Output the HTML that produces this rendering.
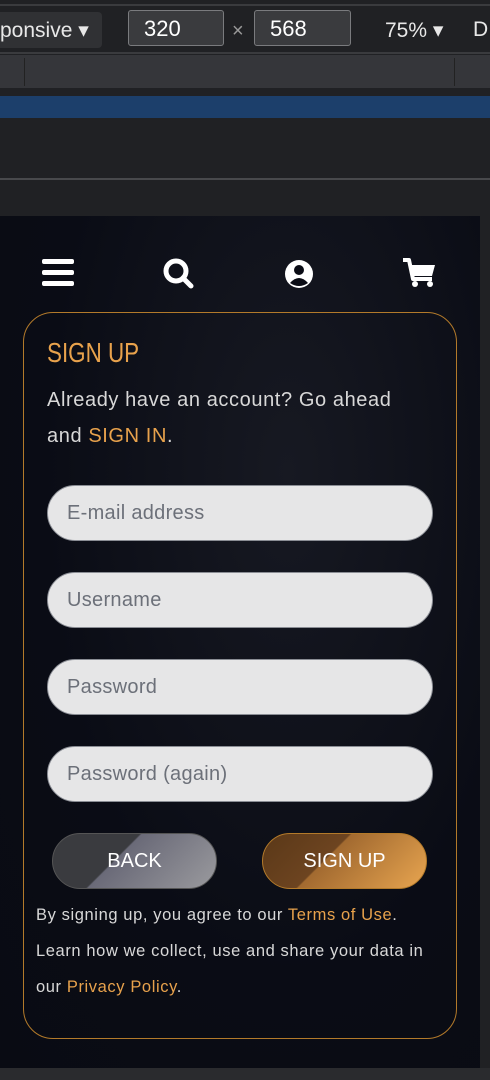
<!DOCTYPE html>
<html><head><style>
body{margin:0;width:490px;height:1080px;background:#202124;position:relative;overflow:hidden;font-family:"Liberation Sans",sans-serif}
.a{position:absolute}
.inp{position:absolute;left:47px;width:384px;height:54px;border:1px solid #8a8d94;border-radius:28px;background:#e6e6e7;color:#6c7079;font-size:20px;line-height:54px;box-sizing:content-box;letter-spacing:0.3px}
.inp span{margin-left:19px}
.btn{position:absolute;top:833px;width:163px;height:54px;border-radius:28px;color:#fff;font-size:20px;text-align:center;line-height:54px}
.o{color:#e8a24c}
.t{color:#d8d8d8}
</style></head><body>
<div class="a" style="left:0;top:4px;width:490px;height:2px;background:#3a3b3e"></div>
<div class="a" style="left:-10px;top:12px;width:112px;height:36px;background:#303134;border-radius:4px"></div>
<div class="a" style="left:0;top:18px;color:#e8e8e8;font-size:21px">ponsive ▾</div>
<div class="a" style="left:128px;top:10px;width:96px;height:36px;border:1px solid #7a7b7e;border-radius:3px;background:#3a3b3e;color:#fff;font-size:22px;line-height:36px;box-sizing:border-box;padding-left:15px">320</div>
<div class="a" style="left:232px;top:20px;color:#999;font-size:20px">×</div>
<div class="a" style="left:254px;top:10px;width:97px;height:36px;border:1px solid #7a7b7e;border-radius:3px;background:#3a3b3e;color:#fff;font-size:22px;line-height:36px;box-sizing:border-box;padding-left:15px">568</div>
<div class="a" style="left:385px;top:18px;color:#e8e8e8;font-size:21px">75% ▾</div>
<div class="a" style="left:473px;top:18px;color:#e8e8e8;font-size:21px">D</div>
<div class="a" style="left:0;top:52px;width:490px;height:2px;background:#3a3b3e"></div>
<div class="a" style="left:0;top:55px;width:490px;height:33px;background:#35363a"></div>
<div class="a" style="left:24px;top:58px;width:1px;height:28px;background:#222"></div>
<div class="a" style="left:454px;top:58px;width:1px;height:28px;background:#222"></div>
<div class="a" style="left:0;top:96px;width:490px;height:22px;background:#1c3f6b"></div>
<div class="a" style="left:0;top:178px;width:490px;height:2px;background:#48494c"></div>
<div class="a" style="left:0;top:216px;width:480px;height:852px;background:radial-gradient(ellipse at 60% 30%,#171922,#0a0c15 60%,#090b13)"></div>
<div class="a" style="left:0;top:1068px;width:490px;height:12px;background:#2a2b2e"></div>
<svg class="a" style="left:42px;top:258px" width="33" height="30"><rect x="0" y="1" width="32" height="5" rx="2" fill="#fff"/><rect x="0" y="12" width="32" height="5" rx="2" fill="#fff"/><rect x="0" y="23" width="32" height="5" rx="2" fill="#fff"/></svg>
<svg class="a" style="left:163px;top:258px" width="32" height="32"><circle cx="13" cy="13" r="10" fill="none" stroke="#fff" stroke-width="5"/><line x1="20" y1="20" x2="28" y2="28" stroke="#fff" stroke-width="5" stroke-linecap="round"/></svg>
<svg class="a" style="left:284px;top:259px" width="30" height="30"><circle cx="15" cy="15" r="14" fill="#fff"/><circle cx="15" cy="11" r="5" fill="#0a0c15"/><path d="M6 24 Q15 14 24 24 Q15 30 6 24Z" fill="#0a0c15"/></svg>
<svg class="a" style="left:402px;top:257px" width="34" height="32"><path d="M1 3 H7 L11 22 H30" fill="none" stroke="#fff" stroke-width="4" stroke-linejoin="round"/><path d="M8 8 H33 L30 19 H11Z" fill="#fff"/><circle cx="13" cy="27" r="3" fill="#fff"/><circle cx="28" cy="27" r="3" fill="#fff"/></svg>
<div class="a" style="left:23px;top:312px;width:432px;height:725px;border:1.5px solid #b37a2a;border-radius:30px"></div>
<div class="a o" style="left:47px;top:337px;font-size:28px;transform:scaleX(0.8);transform-origin:left">SIGN UP</div>
<div class="a t" style="left:47px;top:382px;font-size:20px;line-height:36px;width:420px;letter-spacing:0.6px">Already have an account? Go ahead<br>and <span class="o">SIGN IN</span>.</div>
<div class="inp" style="top:485px"><span>E-mail address</span></div>
<div class="inp" style="top:572px"><span>Username</span></div>
<div class="inp" style="top:659px"><span>Password</span></div>
<div class="inp" style="top:746px"><span>Password (again)</span></div>
<div class="btn" style="left:52px;border:1px solid #555;background:linear-gradient(135deg,#3a3b3f 0%,#3a3b3f 40%,#6a6a78 41%,#9a9a9e 100%)">BACK</div>
<div class="btn" style="left:262px;border:1px solid #b37a2a;background:linear-gradient(135deg,#5a3818 0%,#6d4420 40%,#a26a30 41%,#e8a550 100%)">SIGN UP</div>
<div class="a t" style="left:36px;top:897px;font-size:16.5px;line-height:36px;width:440px;letter-spacing:0.6px">By signing up, you agree to our <span class="o">Terms of Use</span>.<br>Learn how we collect, use and share your data in<br>our <span class="o">Privacy Policy</span>.</div>
</body></html>
